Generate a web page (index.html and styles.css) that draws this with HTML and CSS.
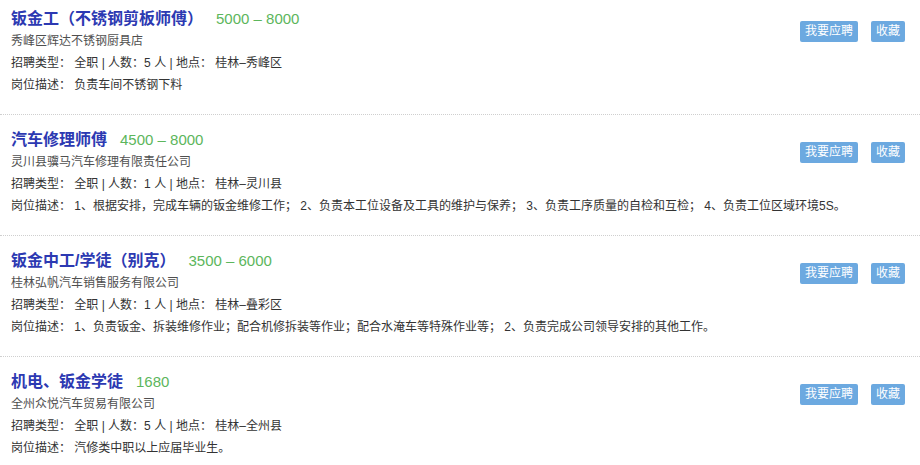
FILE: index.html
```html
<!DOCTYPE html>
<html lang="zh-CN">
<head>
<meta charset="utf-8">
<title>职位列表</title>
<link rel="stylesheet" href="styles.css">
</head>
<body>
<div class="job-list">
  <div class="job">
    <div class="actions">
      <a class="btn">我要应聘</a>
      <a class="btn">收藏</a>
    </div>
    <div class="title-row"><span class="title">钣金工（不锈钢剪板师傅）</span><span class="salary">5000 – 8000</span></div>
    <div class="company">秀峰区辉达不锈钢厨具店</div>
    <div class="line">招聘类型： 全职 | 人数：5 人 | 地点： 桂林–秀峰区</div>
    <div class="line">岗位描述： 负责车间不锈钢下料</div>
  </div>
  <div class="job">
    <div class="actions">
      <a class="btn">我要应聘</a>
      <a class="btn">收藏</a>
    </div>
    <div class="title-row"><span class="title">汽车修理师傅</span><span class="salary">4500 – 8000</span></div>
    <div class="company">灵川县骥马汽车修理有限责任公司</div>
    <div class="line">招聘类型： 全职 | 人数：1 人 | 地点： 桂林–灵川县</div>
    <div class="line">岗位描述： 1、根据安排，完成车辆的钣金维修工作； 2、负责本工位设备及工具的维护与保养； 3、负责工序质量的自检和互检； 4、负责工位区域环境5S。</div>
  </div>
  <div class="job">
    <div class="actions">
      <a class="btn">我要应聘</a>
      <a class="btn">收藏</a>
    </div>
    <div class="title-row"><span class="title">钣金中工/学徒（别克）</span><span class="salary">3500 – 6000</span></div>
    <div class="company">桂林弘帆汽车销售服务有限公司</div>
    <div class="line">招聘类型： 全职 | 人数：1 人 | 地点： 桂林–叠彩区</div>
    <div class="line">岗位描述： 1、负责钣金、拆装维修作业；配合机修拆装等作业；配合水淹车等特殊作业等； 2、负责完成公司领导安排的其他工作。</div>
  </div>
  <div class="job">
    <div class="actions">
      <a class="btn">我要应聘</a>
      <a class="btn">收藏</a>
    </div>
    <div class="title-row"><span class="title">机电、钣金学徒</span><span class="salary">1680</span></div>
    <div class="company">全州众悦汽车贸易有限公司</div>
    <div class="line">招聘类型： 全职 | 人数：5 人 | 地点： 桂林–全州县</div>
    <div class="line">岗位描述： 汽修类中职以上应届毕业生。</div>
  </div>
</div>
</body>
</html>
```
FILE: styles.css
```css
html, body {
  margin: 0;
  padding: 0;
  background: #fff;
}
body {
  font-family: "Liberation Sans", "Noto Sans CJK SC", sans-serif;
  color: #333;
  overflow: hidden;
}
.job-list {
  margin-top: -6px;
}
.job {
  padding: 14px 15px 18px 11px;
  border-bottom: 1px dotted #cfcfcf;
}
.actions {
  float: right;
  display: flex;
  gap: 13px;
  margin-top: 13px;
}
.btn {
  display: block;
  height: 21px;
  line-height: 21px;
  padding: 0 5px;
  font-size: 12px;
  color: #fff;
  background: #6ca9e0;
  border-radius: 2px;
}
.title-row {
  height: 22px;
  line-height: 22px;
  white-space: nowrap;
}
.title {
  font-size: 16px;
  font-weight: bold;
  color: #2c39b2;
}
.salary {
  margin-left: 13px;
  font-size: 15px;
  color: #5cb65c;
}
.company {
  height: 22px;
  line-height: 22px;
  font-size: 12px;
  color: #4f4f4f;
}
.line {
  height: 22px;
  line-height: 22px;
  font-size: 12px;
  color: #333;
  white-space: nowrap;
}
```
